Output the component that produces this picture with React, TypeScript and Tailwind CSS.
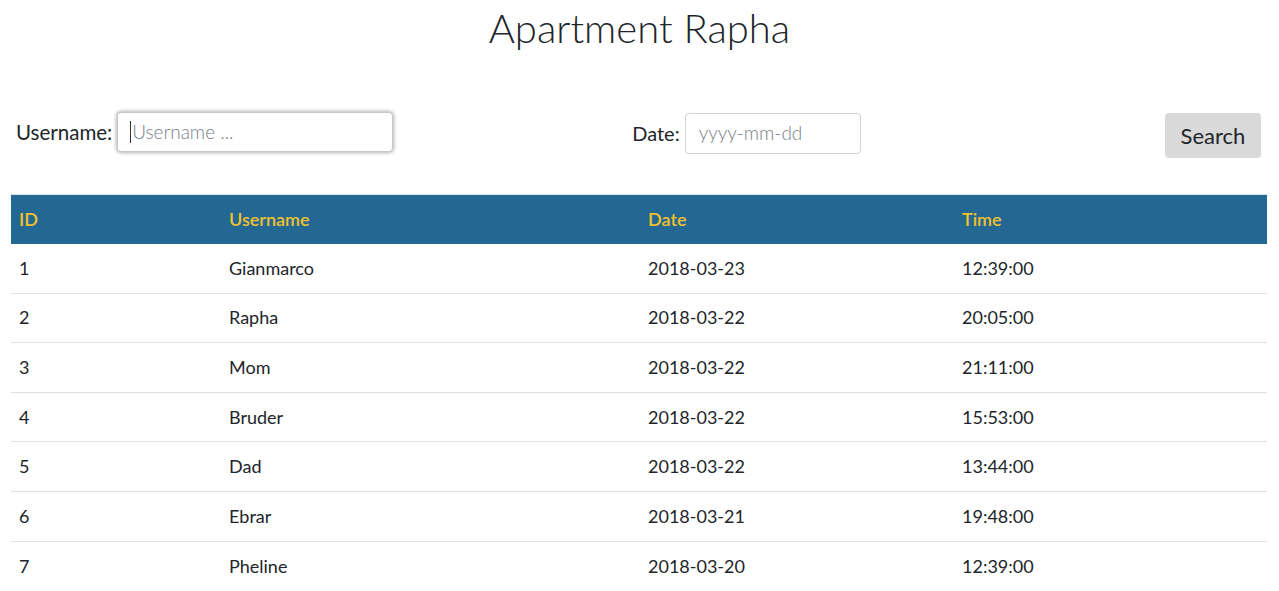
import React from "react";

const rows = [
  ["1", "Gianmarco", "2018-03-23", "12:39:00"],
  ["2", "Rapha", "2018-03-22", "20:05:00"],
  ["3", "Mom", "2018-03-22", "21:11:00"],
  ["4", "Bruder", "2018-03-22", "15:53:00"],
  ["5", "Dad", "2018-03-22", "13:44:00"],
  ["6", "Ebrar", "2018-03-21", "19:48:00"],
  ["7", "Pheline", "2018-03-20", "12:39:00"],
];

export default function App() {
  return (
    <div
      className="w-[1279px] h-[591px] overflow-hidden bg-white text-[#212529]"
      style={{ fontFamily: "Lato, 'Noto Sans', sans-serif" }}
    >
      <h1 className="text-center text-[40px] font-light leading-[48px] pt-[4px] text-[#212529]">
        Apartment Rapha
      </h1>
      <div className="flex items-start pl-[16px] mt-[60px] h-[47px]">
        <div className="flex items-center h-[40px]">
          <span className="text-[20.5px] mr-[5px]">Username:</span>
          <div className="w-[276px] h-[40px] rounded-[4px] bg-white shadow-[0_0_4px_rgba(0,0,0,0.45)] border border-[#c8c8c8] flex items-center pl-[12px]">
            <span className="w-px h-[22px] bg-[#333] mr-[1px]" />
            <span className="text-[19px] text-[#7a8088] font-light">Username ...</span>
          </div>
        </div>
        <div className="flex items-center ml-[239px] mt-[1px] h-[40px]">
          <span className="text-[20px] mr-[5px]">Date:</span>
          <div className="w-[176px] h-[41px] rounded-[4px] border border-[#ced4da] flex items-center pl-[13px]">
            <span className="text-[19px] text-[#7a8088] font-light">yyyy-mm-dd</span>
          </div>
        </div>
        <button className="ml-auto mt-[1px] w-[96px] h-[45px] rounded-[4px] bg-[#d9d9d9] text-[22px] text-[#212529] mr-[18px]">
          Search
        </button>
      </div>
      <table className="ml-[11px] mt-[35px] w-[1256px] border-collapse table-fixed">
        <colgroup>
          <col className="w-[210px]" />
          <col className="w-[419px]" />
          <col className="w-[314px]" />
          <col className="w-[313px]" />
        </colgroup>
        <thead>
          <tr className="bg-[#236892] border-t border-[#dee2e6]">
            {["ID", "Username", "Date", "Time"].map((h) => (
              <th
                key={h}
                className="text-left font-semibold text-[18px] text-[#f2c12e] px-[8px] h-[49px] align-middle"
              >
                {h}
              </th>
            ))}
          </tr>
        </thead>
        <tbody>
          {rows.map((r, i) => (
            <tr key={r[0]} className={i === 0 ? "" : "border-t border-[#dee2e6]"}>
              {r.map((c, j) => (
                <td
                  key={j}
                  className="px-[8px] text-[18px] h-[49.6px] align-middle text-[#212529]"
                >
                  {c}
                </td>
              ))}
            </tr>
          ))}
        </tbody>
      </table>
    </div>
  );
}
